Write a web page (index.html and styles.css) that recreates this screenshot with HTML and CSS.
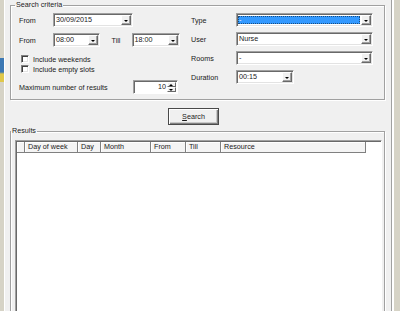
FILE: index.html
```html
<!DOCTYPE html>
<html lang="en">
<head>
    <meta charset="UTF-8">
    <title>Find free slots</title>
    <link rel="stylesheet" href="styles.css">
</head>
<body>

<div class="window">
    <div class="edge-left"></div>

    <div class="form">
        <!-- Search criteria -->
        <fieldset class="group criteria">
            <legend>Search criteria</legend>

            <div class="columns">
                <div class="col-left">
                    <div class="row">
                        <span class="label w-from">From</span>
                        <div class="combo w-date"><span class="value">30/09/2015</span><span class="drop"></span></div>
                    </div>
                    <div class="row row-2">
                        <span class="label w-from">From</span>
                        <div class="combo w-time"><span class="value">08:00</span><span class="drop"></span></div>
                        <span class="label w-till">Till</span>
                        <div class="combo w-time2"><span class="value">18:00</span><span class="drop"></span></div>
                    </div>
                    <div class="check first"><span class="box"></span>Include weekends</div>
                    <div class="check"><span class="box"></span>Include empty slots</div>
                    <div class="row row-max">
                        <span class="label w-max">Maximum number of results</span>
                        <div class="spin"><span class="value">10</span><span class="spin-btns"><span class="up"></span><span class="down"></span></span></div>
                    </div>
                </div>

                <div class="col-right">
                    <div class="row">
                        <span class="label w-right">Type</span>
                        <div class="combo w-wide focused"><span class="value"><span class="sel">-</span></span><span class="drop"></span></div>
                    </div>
                    <div class="row">
                        <span class="label w-right">User</span>
                        <div class="combo w-wide"><span class="value">Nurse</span><span class="drop"></span></div>
                    </div>
                    <div class="row">
                        <span class="label w-right">Rooms</span>
                        <div class="combo w-wide"><span class="value">-</span><span class="drop"></span></div>
                    </div>
                    <div class="row">
                        <span class="label w-right">Duration</span>
                        <div class="combo w-dur"><span class="value">00:15</span><span class="drop"></span></div>
                    </div>
                </div>
            </div>
        </fieldset>

        <div class="actions">
            <button class="btn"><u>S</u>earch</button>
        </div>

        <!-- Results -->
        <fieldset class="group results">
            <legend>Results</legend>
            <div class="list">
                <div class="list-head">
                    <span class="hcell"></span>
                    <span class="hcell">Day of week</span>
                    <span class="hcell">Day</span>
                    <span class="hcell">Month</span>
                    <span class="hcell">From</span>
                    <span class="hcell">Till</span>
                    <span class="hcell">Resource</span>
                </div>
            </div>
        </fieldset>
    </div>

    <div class="edge-right"></div>
</div>

</body>
</html>
```

FILE: styles.css
```css
* {
    box-sizing: border-box;
    margin: 0;
    padding: 0;
}

body {
    font: 7.2px "Liberation Sans", Arial, sans-serif;
    color: #1a1a1a;
    background: #f0f0f0;
    overflow: hidden;
}

.window {
    display: flex;
    width: 400px;
    height: 311px;
}

/* window frame */
.edge-left {
    width: 5px;
    flex: none;
    border-right: 1px solid #fff;
    background: linear-gradient(to bottom,
        #d6d3c6 0, #d6d3c6 58px,
        #3c78b4 58px, #3c78b4 72px,
        #e0c84a 74px, #e0c84a 82px,
        #d6d3c6 82px);
}

.edge-right {
    width: 9px;
    flex: none;
    border-left: 1px solid #a0a0a0;
    background: linear-gradient(to right, #fff 0, #fff 2px, #d6d3c6 2px);
}

.form {
    flex: 1;
    padding: 0 6px 0 5px;
}

/* group boxes */
.group {
    border: 1px solid #a0a0a0;
    box-shadow: 1px 1px 0 #fff, inset 1px 1px 0 #fff;
    padding: 0 10px 0 8px;
}

.group legend {
    margin-left: -4px;
    padding: 0 1px;
    line-height: 10px;
}

.criteria {
    height: 100px;
    padding-top: 3px;
}

.columns {
    display: flex;
    gap: 11px;
}

.col-left {
    width: 161px;
}

.col-right {
    display: flex;
    flex-direction: column;
    gap: 5px;
}

.row {
    display: flex;
    align-items: center;
    height: 14px;
}

.row-2 {
    margin-top: 6px;
}

.row-max {
    margin-top: 6px;
}

.label {
    flex: none;
}

.w-from { width: 34px; }
.w-till { width: 20px; margin-left: 12px; }
.w-max { width: 114px; }
.w-right { width: 45px; }

/* combo boxes */
.combo {
    display: flex;
    height: 14px;
    background: #fff;
    border: 1px solid;
    border-color: #a0a0a0 #fff #fff #a0a0a0;
    box-shadow: inset 1px 1px 0 #696969, inset -1px -1px 0 #e3e3e3;
    padding: 1px;
}

.w-date { width: 80px; }
.w-time { width: 47px; }
.w-time2 { width: 49px; }
.w-wide { width: 137px; }
.w-dur { width: 58px; }

.combo .value {
    flex: 1;
    line-height: 10px;
    padding-left: 1px;
    white-space: nowrap;
    overflow: hidden;
}

.focused .value {
    margin: 1px 1px 1px 0;
    background: #3399ff;
    color: #fff;
    outline: 1px dotted #1a4d80;
    outline-offset: -1px;
    line-height: 8px;
}

.drop {
    position: relative;
    width: 10px;
    flex: none;
    background: #f0f0f0;
    border: 1px solid;
    border-color: #fff #696969 #696969 #fff;
    box-shadow: inset -1px -1px 0 #a0a0a0;
}

.drop::after {
    content: "";
    position: absolute;
    left: 2px;
    top: 4px;
    border-left: 2px solid transparent;
    border-right: 2px solid transparent;
    border-top: 2px solid #000;
}

/* check boxes */
.check {
    display: flex;
    align-items: center;
    height: 10px;
    padding-left: 2px;
}

.check.first {
    margin-top: 7px;
}

.box {
    width: 8px;
    height: 8px;
    margin-right: 4px;
    background: #fff;
    border: 1px solid;
    border-color: #808080 #fff #fff #808080;
    box-shadow: inset 1px 1px 0 #404040, inset -1px -1px 0 #e3e3e3;
}

/* spin edit */
.spin {
    display: flex;
    width: 45px;
    height: 14px;
    background: #fff;
    border: 1px solid;
    border-color: #a0a0a0 #fff #fff #a0a0a0;
    box-shadow: inset 1px 1px 0 #696969;
    padding: 1px;
}

.spin .value {
    flex: 1;
    text-align: right;
    line-height: 10px;
    padding-right: 1px;
}

.spin-btns {
    display: flex;
    flex-direction: column;
    width: 9px;
}

.spin-btns span {
    position: relative;
    flex: 1;
    background: #f0f0f0;
    border: 1px solid;
    border-color: #fff #696969 #696969 #fff;
}

.spin-btns span::after {
    content: "";
    position: absolute;
    left: 1px;
    top: 1px;
    border-left: 2px solid transparent;
    border-right: 2px solid transparent;
}

.spin-btns .up::after {
    border-bottom: 2px solid #000;
}

.spin-btns .down::after {
    border-top: 2px solid #000;
}

/* search button */
.actions {
    display: flex;
    justify-content: center;
    padding: 8px 8px 0 0;
    height: 26px;
}

.btn {
    width: 51px;
    height: 17px;
    font: inherit;
    color: #1a1a1a;
    background: #f0f0f0;
    border: 1px solid #4a4a4a;
    box-shadow: inset 1px 1px 0 #fff, inset -1px -1px 0 #808080, inset -2px -2px 0 #c8c8c8;
}

/* results */
.results {
    height: 200px;
    padding: 4px 2px 0 4px;
}

.list {
    height: 180px;
    background: #fff;
    border: 1px solid;
    border-color: #a0a0a0 #fff #fff #a0a0a0;
    box-shadow: inset 1px 1px 0 #696969;
    padding: 1px 0 0 1px;
}

.list-head {
    display: grid;
    grid-template-columns: 8px 53px 23px 50px 35px 35px 145px;
    height: 11px;
}

.hcell {
    background: #f4f4f4;
    border-right: 1px solid #808080;
    border-bottom: 1px solid #808080;
    box-shadow: inset 1px 1px 0 #fff;
    line-height: 10px;
    padding-left: 3px;
    white-space: nowrap;
}
```
